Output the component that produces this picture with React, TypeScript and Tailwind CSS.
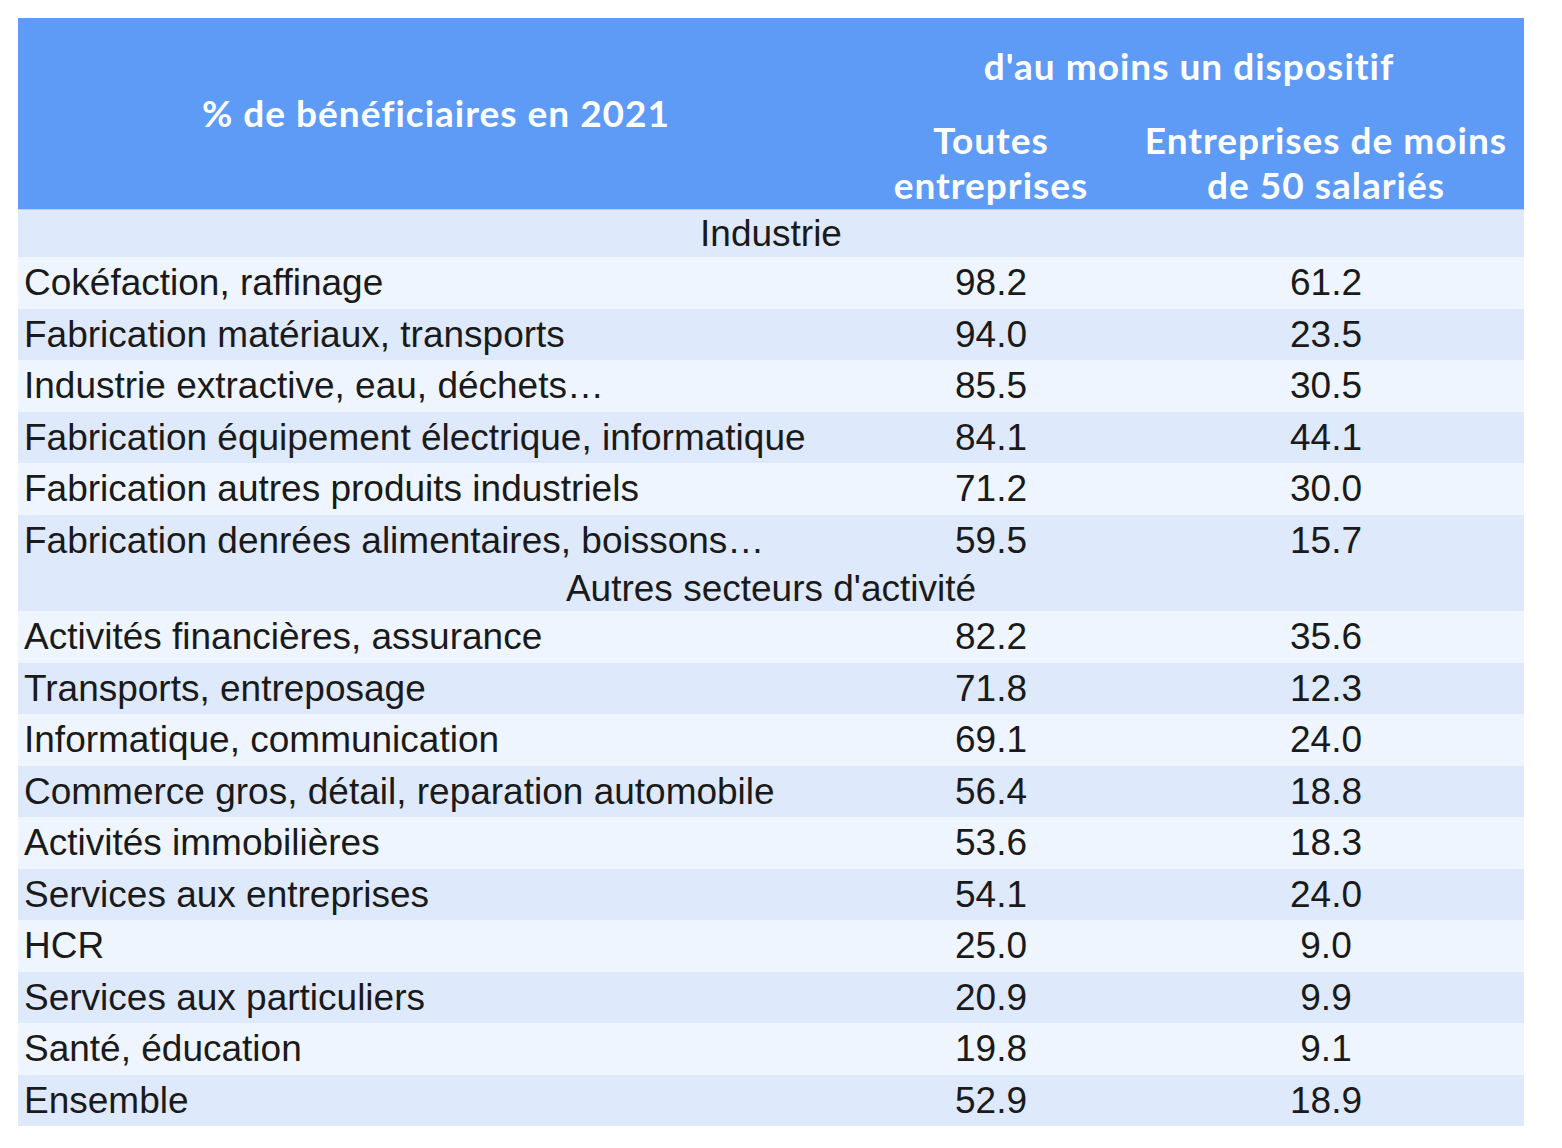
type Row = { label: string; all: string; small: string };

const industrie: Row[] = [
  { label: "Cokéfaction, raffinage", all: "98.2", small: "61.2" },
  { label: "Fabrication matériaux, transports", all: "94.0", small: "23.5" },
  { label: "Industrie extractive, eau, déchets…", all: "85.5", small: "30.5" },
  { label: "Fabrication équipement électrique, informatique", all: "84.1", small: "44.1" },
  { label: "Fabrication autres produits industriels", all: "71.2", small: "30.0" },
  { label: "Fabrication denrées alimentaires, boissons…", all: "59.5", small: "15.7" },
];

const autres: Row[] = [
  { label: "Activités financières, assurance", all: "82.2", small: "35.6" },
  { label: "Transports, entreposage", all: "71.8", small: "12.3" },
  { label: "Informatique, communication", all: "69.1", small: "24.0" },
  { label: "Commerce gros, détail, reparation automobile", all: "56.4", small: "18.8" },
  { label: "Activités immobilières", all: "53.6", small: "18.3" },
  { label: "Services aux entreprises", all: "54.1", small: "24.0" },
  { label: "HCR", all: "25.0", small: "9.0" },
  { label: "Services aux particuliers", all: "20.9", small: "9.9" },
  { label: "Santé, éducation", all: "19.8", small: "9.1" },
  { label: "Ensemble", all: "52.9", small: "18.9" },
];

const DARK = "bg-[#dfe9fc]";
const LIGHT = "bg-[#eef5fe]";

function DataRow({ row, dark }: { row: Row; dark: boolean }) {
  return (
    <tr className={`h-[51.5px] ${dark ? DARK : LIGHT}`}>
      <td className="pl-[6px] align-middle">{row.label}</td>
      <td className="text-center align-middle">{row.all}</td>
      <td className="text-center align-middle">{row.small}</td>
    </tr>
  );
}

function SectionRow({ label, h }: { label: string; h: string }) {
  return (
    <tr className={`${h} ${DARK}`}>
      <td colSpan={3} className="text-center align-middle">
        {label}
      </td>
    </tr>
  );
}

export default function App() {
  const head = "font-['Lato',sans-serif] font-bold text-white text-[37px] tracking-[1px]";
  return (
    <div className="min-h-screen bg-white pt-[18px] pl-[18px]">
      <table className="w-[1506px] table-fixed border-collapse font-['Liberation_Sans',Arial,sans-serif] text-[37px] leading-none text-[#1a1a1a]">
        <colgroup>
          <col className="w-[836px]" />
          <col className="w-[274px]" />
          <col className="w-[396px]" />
        </colgroup>
        <thead className="bg-[#5e9bf6]">
          <tr className="h-[94px]">
            <th rowSpan={2} className={`${head} text-center align-middle pb-[2px]`}>
              % de bénéficiaires en 2021
            </th>
            <th colSpan={2} className={`${head} text-center align-middle`}>
              d'au moins un dispositif
            </th>
          </tr>
          <tr className="h-[97px] border-b border-[#b7d0f8]">
            <th className={`${head} text-center align-bottom pb-[2px] leading-[45px]`}>
              Toutes
              <br />
              entreprises
            </th>
            <th className={`${head} text-center align-bottom pb-[2px] leading-[45px]`}>
              Entreprises de moins
              <br />
              de 50 salariés
            </th>
          </tr>
        </thead>
        <tbody>
          <SectionRow label="Industrie" h="h-[48px]" />
          {industrie.map((r, i) => (
            <DataRow key={r.label} row={r} dark={i % 2 === 1} />
          ))}
          <SectionRow label="Autres secteurs d'activité" h="h-[45px]" />
          {autres.map((r, i) => (
            <DataRow key={r.label} row={r} dark={i % 2 === 1} />
          ))}
        </tbody>
      </table>
    </div>
  );
}
